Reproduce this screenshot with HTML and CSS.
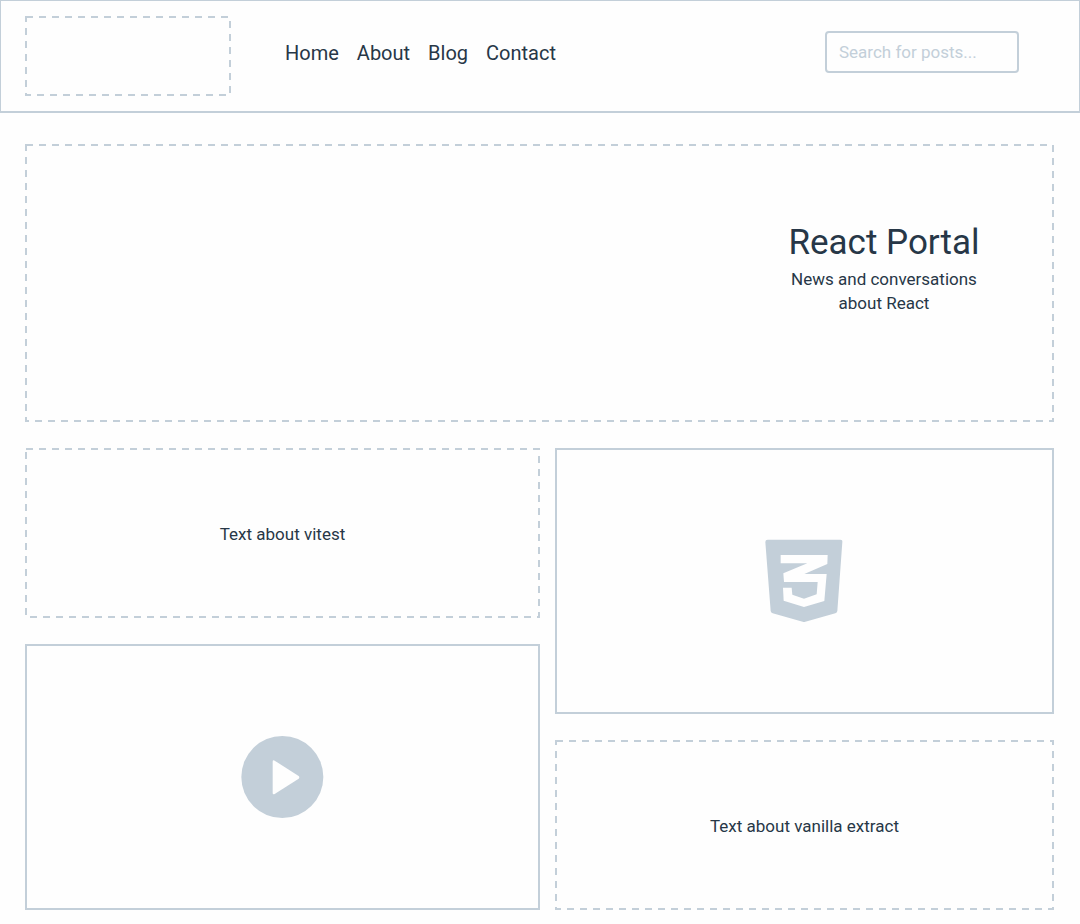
FILE: index.html
```html
<!DOCTYPE html>
<html lang="en">
<head>
<meta charset="utf-8">
<meta name="viewport" content="width=device-width, initial-scale=1">
<title>React Portal</title>
<link rel="stylesheet" href="styles.css">
</head>
<body>
<header class="site-header">
  <a class="logo dashed" href="#" aria-label="React Portal">
    <svg class="outline" aria-hidden="true"><rect x="1" y="1"/></svg>
  </a>
  <nav class="nav">
    <a href="#">Home</a>
    <a href="#">About</a>
    <a href="#">Blog</a>
    <a href="#">Contact</a>
  </nav>
  <form class="search" role="search">
    <input class="search-input" type="search" aria-label="Search for posts" placeholder="Search for posts...">
  </form>
</header>
<main class="page">
  <section class="hero dashed">
    <svg class="outline" aria-hidden="true"><rect x="1" y="1"/></svg>
    <div class="hero-text">
      <h1>React Portal</h1>
      <p>News and conversations about React</p>
    </div>
  </section>
  <div class="columns">
    <div class="column column-left">
      <article class="card card-text dashed">
        <svg class="outline" aria-hidden="true"><rect x="1" y="1"/></svg>
        <p>Text about vitest</p>
      </article>
      <article class="card card-media">
        <button class="play" type="button" aria-label="Play video">
          <svg class="icon" viewBox="46 44 252 252" aria-hidden="true">
            <circle class="fill" cx="170" cy="170" r="123"/>
            <path class="cutout" d="M141 124Q141 118 147 121L219 167Q223 171 219 175L147 221Q141 224 141 218Z"/>
          </svg>
        </button>
      </article>
    </div>
    <div class="column column-right">
      <article class="card card-media">
        <svg class="icon" viewBox="39 42 252 252" role="img" aria-label="CSS3">
          <path class="fill" d="M53 44H271Q278 44 277 51L262 258Q261 263 256 265L166 290Q162 292 158 290L68 265Q63 263 62 258L46 51Q46 44 53 44Z"/>
          <path class="cutout" d="M92 90H233L232 117L163 147H230L223 228L162 246L101 227L99 188H125L127 209L162 221L200 208L203 171H102L100 145L172 115H92Z"/>
        </svg>
      </article>
      <article class="card card-text dashed">
        <svg class="outline" aria-hidden="true"><rect x="1" y="1"/></svg>
        <p>Text about vanilla extract</p>
      </article>
    </div>
  </div>
</main>
</body>
</html>
```
FILE: styles.css
```css
:root {
  --line: #c3cfd9;
  --ink: #273747;
  --paper: #fefefe;
}

* {
  box-sizing: border-box;
}

body {
  margin: 0;
  background: var(--paper);
  color: var(--ink);
  font: 17px/24px Roboto, "Liberation Sans", sans-serif;
}

h1,
p {
  margin: 0;
}

/* Dashed frames use a stroke so that the dashes run round the corners. */
.dashed {
  position: relative;
}

.outline {
  position: absolute;
  inset: 0;
  width: 100%;
  height: 100%;
  pointer-events: none;
}

.outline rect {
  width: calc(100% - 2px);
  height: calc(100% - 2px);
  fill: none;
  stroke: var(--line);
  stroke-width: 2px;
  stroke-dasharray: 7 6;
}

.site-header {
  display: flex;
  align-items: center;
  padding: 15px 60px 15px 24px;
  border: 1px solid var(--line);
  border-bottom-width: 2px;
}

.logo {
  width: 206px;
  height: 80px;
}

.nav {
  display: flex;
  gap: 18px;
  margin: 0 0 6px 54px;
  font-size: 20px;
}

.nav a {
  color: inherit;
  text-decoration: none;
}

.search {
  margin: 0 0 8px auto;
}

.search-input {
  display: block;
  width: 194px;
  height: 42px;
  padding: 0 12px;
  border: 2px solid var(--line);
  border-radius: 4px;
  background: transparent;
  color: var(--ink);
  font: inherit;
}

.search-input::placeholder {
  color: var(--line);
  opacity: 1;
}

.page {
  padding: 31px 26px 14px 25px;
}

.hero {
  display: flex;
  align-items: center;
  justify-content: flex-end;
  min-height: 278px;
  padding: 0 70px 28px;
}

.hero-text {
  width: 200px;
  text-align: center;
}

.hero h1 {
  margin-bottom: 4px;
  font-size: 35px;
  font-weight: 400;
  line-height: 40px;
  white-space: nowrap;
}

.columns {
  display: flex;
  gap: 15px;
  margin-top: 26px;
}

.column {
  display: flex;
  flex-direction: column;
  gap: 26px;
  min-width: 0;
}

.column-left {
  flex: 515 1 0;
}

.column-right {
  flex: 499 1 0;
}

.card {
  display: flex;
  align-items: center;
  justify-content: center;
}

.card-text {
  min-height: 170px;
  padding-top: 2px;
}

.card-media {
  min-height: 266px;
  border: 2px solid var(--line);
}

.play {
  padding: 0;
  border: 0;
  background: none;
  cursor: pointer;
}

.icon {
  display: block;
  width: 84px;
  height: 84px;
}

.fill {
  fill: var(--line);
}

.cutout {
  fill: var(--paper);
}
```
